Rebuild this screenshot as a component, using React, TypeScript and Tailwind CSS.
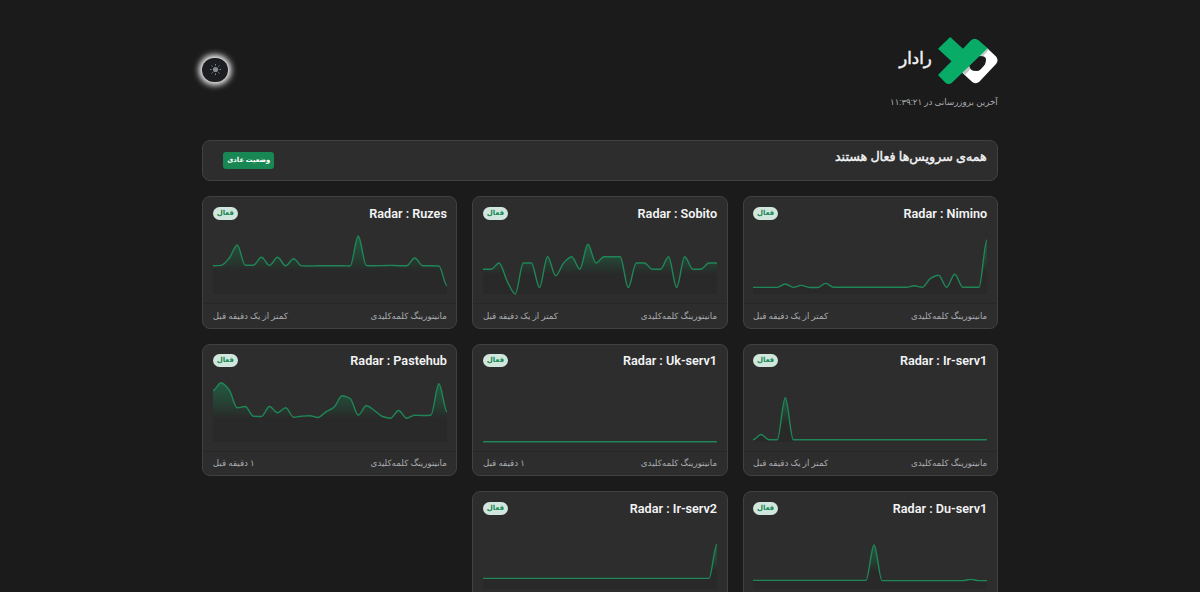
import React from "react";

interface Service {
  name: string;
  updated: string;
  points: number[];
}

const CHART_WIDTH = 234;
const CHART_HEIGHT = 60;

const lessThanMinute = "کمتر از یک دقیقه قبل";
const oneMinute = "۱ دقیقه قبل";

const flat = (value: number, count: number) => Array<number>(count).fill(value);

// points are measured from the top of the chart
const services: Service[] = [
  {
    name: "Radar : Nimino",
    updated: lessThanMinute,
    points: [
      ...flat(53.4, 4), 50, 53.4, 51.4, 53.5, 53.5, 49.4, ...flat(53.3, 10),
      51.8, 53.3, 44.4, 41.3, 53.3, 40.3, 53.3, 53.3, 53.3, 6,
    ],
  },
  {
    name: "Radar : Sobito",
    updated: lessThanMinute,
    points: [
      35.3, 35.3, 29, 47.3, 60, 29, 29, 53.5, 22.8, 41.7, 29, 22.8, 35.3, 10.2,
      29, 22.8, 22.8, 22.8, 53.5, 29, 29, 35.3, 35.3, 22.8, 53.5, 22.8, 35.3,
      35.3, 29, 29,
    ],
  },
  {
    name: "Radar : Ruzes",
    updated: lessThanMinute,
    points: [
      31.7, 31.4, 24.3, 11, 31.3, 31.3, 23.3, 31.3, 23.3, 31.7, 24.7, 31.9, 32,
      31.7, 31.7, 31.8, 31.7, 32, 2, 31.5, 31.7, 31.6, 31.4, 31.7, 31.8, 24,
      31.7, 31.7, 32, 51.7,
    ],
  },
  {
    name: "Radar : Ir-serv1",
    updated: lessThanMinute,
    points: [57.8, 52.5, 57.8, 57.8, 15.8, ...flat(57.8, 25)],
  },
  {
    name: "Radar : Uk-serv1",
    updated: oneMinute,
    points: flat(59.8, 30),
  },
  {
    name: "Radar : Pastehub",
    updated: oneMinute,
    points: [
      8.5, 0.8, 7.8, 25.8, 24.5, 34.2, 34.5, 24.5, 30.8, 25.8, 35.2, 34.2, 33.8,
      35.5, 29.8, 25.2, 13.8, 16.5, 33.2, 23.8, 28.5, 34.5, 36.2, 28.5, 36.2,
      33.2, 33.5, 33.2, 1.8, 29.8,
    ],
  },
  {
    name: "Radar : Du-serv1",
    updated: lessThanMinute,
    points: [...flat(51.4, 15), 16, ...flat(51.6, 11), 50.4, 51.6, 51.6],
  },
  {
    name: "Radar : Ir-serv2",
    updated: lessThanMinute,
    points: [...flat(49.4, 29), 15.3],
  },
];

// monotone cubic curve through evenly spaced points
function curvePath(points: number[]) {
  const step = CHART_WIDTH / (points.length - 1);
  const tangents = points.map((point, i) => {
    if (i === 0 || i === points.length - 1) return 0;
    const before = point - points[i - 1];
    const after = points[i + 1] - point;
    if (before * after <= 0) return 0;
    return (2 * before * after) / (before + after);
  });
  let d = `M0 ${points[0]}`;
  for (let i = 1; i < points.length; i++) {
    const x0 = (i - 1) * step;
    const x1 = i * step;
    d += ` C${x0 + step / 3} ${points[i - 1] + tangents[i - 1] / 3} ${
      x1 - step / 3
    } ${points[i] - tangents[i] / 3} ${x1} ${points[i]}`;
  }
  return d;
}

function Sparkline({ id, points }: { id: string; points: number[] }) {
  const line = curvePath(points);
  return (
    <svg
      className="block w-[234px] h-[60px] overflow-visible"
      viewBox={`0 0 ${CHART_WIDTH} ${CHART_HEIGHT}`}
      fill="none"
    >
      <defs>
        <linearGradient id={id} x1="0" y1="0" x2="0" y2="1">
          <stop offset="0" stopColor="#198754" stopOpacity="0.5" />
          <stop offset="0.6" stopColor="#262626" stopOpacity="0.6" />
          <stop offset="1" stopColor="#262626" stopOpacity="0.6" />
        </linearGradient>
      </defs>
      <path
        d={`${line} L${CHART_WIDTH} ${CHART_HEIGHT} L0 ${CHART_HEIGHT} Z`}
        fill={`url(#${id})`}
      />
      <path d={line} stroke="#1f8757" strokeWidth="1.4" />
    </svg>
  );
}

function Logo() {
  return (
    <svg className="w-[60px] h-[48px]" viewBox="0 0 60 48" fill="none">
      <path
        d="M49 11 L58 19.5 Q61 23 58 27 L41.5 44.5 Q38 48 34 44.8 L24 35.5 Z"
        fill="#fff"
      />
      <path d="M49.2 11.5 L50.8 13 L26.8 38 L24.5 35.5 Z" fill="#c3c9c6" />
      <path
        d="M40 19 L45 19.2 Q48 19.8 48 23 L47.6 25.5 Q47.2 27.6 45.5 29.3 L42.5 32.4 Q40.8 34 38.5 34 L35.5 33.8 Q32 33 31 28 Z"
        fill="#1b1b1b"
      />
      <path
        d="M12.2 0 L25 11.7 L32.5 3.8 Q36.5 0 40.8 3.5 L49.7 11.3 L14.2 45.5 Q10.5 48.5 7.2 45.5 L0 38 L13.5 24.2 L0 11.7 Z"
        fill="#08ac67"
      />
    </svg>
  );
}

function ServiceCard({ service, index }: { service: Service; index: number }) {
  return (
    <div className="h-[132.5px] bg-[#2d2d2d] border border-[#414143] rounded-lg flex flex-col">
      <div className="flex items-start justify-between px-[9.5px] pt-[6.9px] h-[37px]">
        <h2
          dir="ltr"
          className="text-[12.65px] leading-[19px] font-semibold text-[#f3f4f5]"
        >
          {service.name}
        </h2>
        <span className="mt-[3px] w-[25px] h-[13px] rounded-full bg-[#d1e7dd] text-[#198754] text-[7px] leading-[12px] font-bold text-center">
          فعال
        </span>
      </div>
      <div className="px-[9.5px]">
        <Sparkline id={`chart-${index}`} points={service.points} />
      </div>
      <div className="mt-auto h-[24.5px] pt-[1px] border-t border-[#272729] px-[9.5px] flex items-center justify-between text-[8.7px] text-[#a9acb0]">
        <span>مانیتورینگ کلمه‌کلیدی</span>
        <span>{service.updated}</span>
      </div>
    </div>
  );
}

function App() {
  return (
    <div
      dir="rtl"
      className="h-[592px] overflow-hidden bg-[#1b1b1b] font-[Roboto,'DejaVu_Sans',sans-serif]"
    >
      <div className="w-[795.5px] mx-auto">
        <header className="h-[140px] pt-[37px] flex items-start justify-between">
          <div>
            <div className="flex items-center gap-[6px]">
              <Logo />
              <h1 className="-mt-[4px] text-[16.5px] leading-[24px] [-webkit-text-stroke:0.5px_#f3f4f5] text-[#f3f4f5]">
                رادار
              </h1>
            </div>
            <p className="mt-[8px] text-[8.7px] leading-[18px] text-[#a9acb0]">
              آخرین بروزرسانی در ۱۱:۳۹:۲۱
            </p>
          </div>
          <button
            type="button"
            className="mt-[21px] w-[26px] h-[24px] rounded-full bg-[#1b1d20] shadow-[0_0_6px_3px_#ffffff] flex items-center justify-center"
          >
            <svg className="w-[11px] h-[11px] -mt-[2px]" viewBox="0 0 11 11" fill="none">
              <circle cx="5.5" cy="5.5" r="2.6" fill="#858d91" />
              <path
                d="M5.5 0v1.5M5.5 9.5V11M0 5.5h1.5M9.5 5.5H11M1.6 1.6l1 1M8.4 8.4l1 1M9.4 1.6l-1 1M2.6 8.4l-1 1"
                stroke="#858d91"
                strokeWidth="1"
              />
            </svg>
          </button>
        </header>
        <div className="h-[41px] bg-[#2d2d2d] border border-[#414143] rounded-lg px-[10px] flex items-start justify-between">
          <p className="mt-[6px] text-[12.7px] leading-[20px] [-webkit-text-stroke:0.4px_#f3f4f5] text-[#f3f4f5]">
            همه‌ی سرویس‌ها فعال هستند
          </p>
          <span className="mt-[11px] ml-[10px] w-[51px] h-[17px] rounded-[3px] bg-[#198754] text-white text-[6.8px] leading-[16px] font-bold text-center whitespace-nowrap">
            وضعیت عادی
          </span>
        </div>
        <div className="mt-[15px] grid grid-cols-3 gap-[15px]">
          {services.map((service, index) => (
            <ServiceCard key={service.name} service={service} index={index} />
          ))}
        </div>
      </div>
    </div>
  );
}

export default App;
